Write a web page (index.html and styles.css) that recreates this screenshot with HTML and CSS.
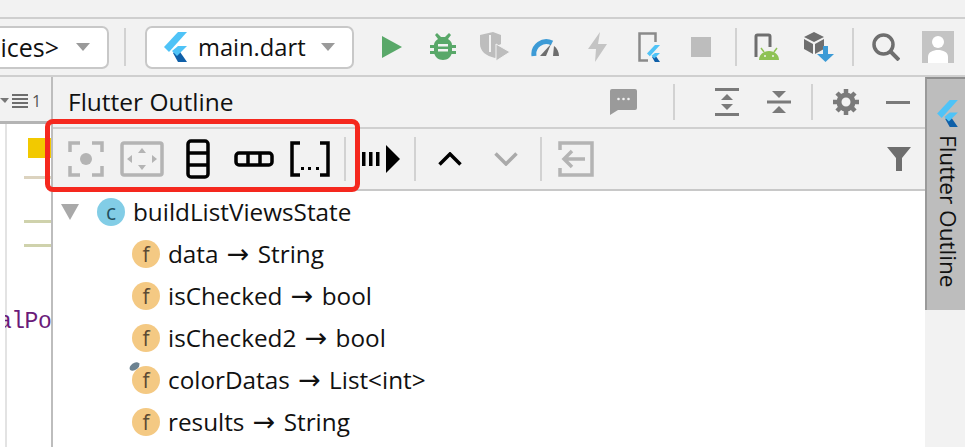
FILE: index.html
```html
<!DOCTYPE html>
<html>

<head>
  <meta charset="UTF-8">
  <meta name="viewport" content="width=device-width, initial-scale=1">
  <title>Flutter Outline</title>

  <link rel="stylesheet" href="styles.css">
</head>

<body>
  <svg class="defs" width="0" height="0">
    <symbol id="flutter" viewBox="0 0 23 30">
      <polygon points="9,21 14,17 23,30 14,30" fill="#0f5fa8" />
      <polygon points="14,0 23,0 5,20 0,15" fill="#4fc3f7" />
      <polygon points="14,14 23,14 13,24 8,19" fill="#4fc3f7" />
    </symbol>
  </svg>

  <div class="top_strip"></div>

  <div class="toolbar">
    <div class="combo combo_devices">
      <span>ices&gt;</span>
      <i class="combo_arrow"></i>
    </div>
    <i class="sep sep_tall sep_devices"></i>
    <div class="combo combo_main">
      <svg class="combo_logo" width="23" height="30"><use href="#flutter" /></svg>
      <span>main.dart</span>
      <i class="combo_arrow"></i>
    </div>

    <div class="tools tools_run">
      <span class="tool"><svg width="20" height="22" viewBox="0 0 20 22"><polygon points="0,0 20,11 0,22" fill="#59a869" /></svg></span>
      <span class="tool"><svg width="26" height="28" viewBox="0 0 26 28" fill="#59a869">
          <path d="M7 0l4 4h4l4-4 2 2-3 4c3 2 4 4 4 6h4v3h-4v3h4v3h-4.400c-1 3-4 6-8.600 6s-7.600-3-8.600-6H0v-3h4v-3H0v-3h4c0-2 1-4 4-6L5 2z" />
          <rect x="8" y="11" width="10" height="2.500" fill="#f2f2f2" />
          <rect x="8" y="16" width="10" height="2.500" fill="#f2f2f2" />
        </svg></span>
      <span class="tool"><svg width="30" height="30" viewBox="0 0 30 30">
          <path d="M0 3l13-3 8 3v9l-4 2v11l-2 1C6 24 0 19 0 12z" fill="#bdbdbd" />
          <path d="M10 3v17" stroke="#f2f2f2" stroke-width="2" />
          <polygon points="16,12 30,20 16,29" fill="#bdbdbd" stroke="#f2f2f2" stroke-width="1" />
        </svg></span>
      <span class="tool"><svg width="30" height="20" viewBox="0 0 30 20">
          <path d="M3 19A12.500 12.500 0 0 1 21 6" fill="none" stroke="#3d9bd6" stroke-width="5" />
          <path d="M9 19L20 7l-5 12z" fill="#6e6e6e" />
          <path d="M23 9c3 2 5 6 5 10h-6z" fill="#6e6e6e" />
        </svg></span>
      <span class="tool"><svg width="19" height="30" viewBox="0 0 19 30"><polygon points="12,0 0,17 8,17 7,30 19,12 10,12" fill="#c4c4c4" /></svg></span>
      <span class="tool"><svg width="22" height="30" viewBox="0 0 22 30">
          <path d="M10 28.500H1.500V1.500h16V10" fill="none" stroke="#8a8a8a" stroke-width="2.500" />
          <svg x="9" y="13" width="13" height="17"><use href="#flutter" /></svg>
        </svg></span>
      <span class="tool"><svg width="20" height="20" viewBox="0 0 20 20"><rect width="20" height="20" fill="#bdbdbd" /></svg></span>
    </div>
    <i class="sep sep_tall sep_a"></i>
    <div class="tools tools_device">
      <span class="tool"><svg width="26" height="28" viewBox="0 0 26 28">
          <path d="M3 24V3.500a1.500 1.500 0 0 1 1.500-1.500h11a1.500 1.500 0 0 1 1.500 1.500V14" fill="none" stroke="#6e6e6e" stroke-width="3" />
          <path d="M6 27c0-5 4-9 10-9s10 4 10 9z" fill="#8ec255" />
          <path d="M8 15l3 4M24 15l-3 4" stroke="#8ec255" stroke-width="1.500" />
          <circle cx="12" cy="23" r="1" fill="#f2f2f2" />
          <circle cx="20" cy="23" r="1" fill="#f2f2f2" />
        </svg></span>
      <span class="tool"><svg width="30" height="30" viewBox="0 0 30 30">
          <polygon points="10,0 20,5 10,10 0,5" fill="#6e6e6e" />
          <polygon points="0,7 9,12 9,22 0,17" fill="#6e6e6e" />
          <polygon points="11,12 20,7 20,17 11,22" fill="#6e6e6e" />
          <path d="M19 14h5v8h6l-8.500 8-8.500-8h6z" fill="#3d9bd6" />
        </svg></span>
    </div>
    <i class="sep sep_tall sep_b"></i>
    <span class="search"><svg width="28" height="28" viewBox="0 0 28 28" fill="none" stroke="#6e6e6e">
        <circle cx="11.500" cy="11.500" r="9.500" stroke-width="3.500" />
        <path d="M18 18l9 9" stroke-width="4" />
      </svg></span>
    <span class="avatar"><svg width="32" height="32" viewBox="0 0 32 32">
        <rect width="32" height="32" fill="#c4c4c4" />
        <circle cx="16" cy="11" r="6" fill="#fff" />
        <path d="M6 32v-6c0-5 5-7 10-7s10 2 10 7v6z" fill="#fff" />
      </svg></span>
  </div>

  <div class="work">
    <div class="editor">
      <div class="editor_head">
        <i class="mini_arrow"></i>
        <svg width="16" height="14" viewBox="0 0 16 14" fill="#6e6e6e">
          <rect width="16" height="2" />
          <rect y="4" width="16" height="2" />
          <rect y="8" width="16" height="2" />
          <rect y="12" width="16" height="2" />
        </svg>
        <span>1</span>
      </div>
      <div class="code">
        <i class="mark mark_yellow"></i>
        <i class="mark mark_tan"></i>
        <i class="mark mark_olive"></i>
        <i class="mark mark_olive2"></i>
        <p class="code_text">alPo</p>
      </div>
    </div>

    <div class="outline">
      <div class="outline_head">
        <p class="outline_title">Flutter Outline</p>
        <span class="head_tool head_comment"><svg width="27" height="26" viewBox="0 0 27 26">
            <path d="M2 0h23a2 2 0 0 1 2 2v17a2 2 0 0 1-2 2H8l-8 5V2a2 2 0 0 1 2-2z" fill="#9a9a9a" />
            <circle cx="8.500" cy="10" r="1.300" fill="#f2f2f2" />
            <circle cx="13.500" cy="10" r="1.300" fill="#f2f2f2" />
            <circle cx="18.500" cy="10" r="1.300" fill="#f2f2f2" />
          </svg></span>
        <i class="sep sep_head sep_c"></i>
        <span class="head_tool head_expand"><svg width="24" height="28" viewBox="0 0 24 28" fill="#7a7a7a">
            <rect width="24" height="3" />
            <rect y="25" width="24" height="3" />
            <polygon points="12,6 18,12 6,12" />
            <polygon points="12,22 18,16 6,16" />
          </svg></span>
        <span class="head_tool head_collapse"><svg width="24" height="26" viewBox="0 0 24 26" fill="#7a7a7a">
            <rect y="11.500" width="24" height="3" />
            <polygon points="12,9 5,2 19,2" />
            <polygon points="12,17 5,24 19,24" />
          </svg></span>
        <i class="sep sep_head sep_d"></i>
        <span class="head_tool head_gear"><svg width="26" height="26" viewBox="0 0 26 26">
            <circle cx="13" cy="13" r="7" fill="none" stroke="#7a7a7a" stroke-width="5" />
            <path d="M13 0v26M0 13h26M4 4l18 18M22 4L4 22" stroke="#7a7a7a" stroke-width="4.500" stroke-dasharray="4.500 17 4.500" />
          </svg></span>
        <span class="head_tool head_minus"><i></i></span>
      </div>

      <div class="outline_bar">
        <span class="slot"><svg width="36" height="36" viewBox="0 0 36 36" fill="none" stroke="#b4b4b4" stroke-width="3.500">
            <path d="M2 11V2h10M24 2h10v9M34 25v9H24M12 34H2v-9" />
            <circle cx="18" cy="18" r="6" fill="#b4b4b4" stroke="none" />
          </svg></span>
        <span class="slot"><svg width="44" height="36" viewBox="0 0 44 36">
            <rect x="2" y="2" width="40" height="32" rx="2" fill="none" stroke="#b4b4b4" stroke-width="3.500" />
            <g fill="#b4b4b4">
              <polygon points="22,7 26,12 18,12" />
              <polygon points="22,29 26,24 18,24" />
              <polygon points="7,18 12,14 12,22" />
              <polygon points="37,18 32,14 32,22" />
            </g>
          </svg></span>
        <span class="slot"><svg width="24" height="40" viewBox="0 0 24 40" fill="none" stroke="#000" stroke-width="3.500">
            <rect x="2" y="2" width="20" height="36" rx="3" />
            <path d="M2 14h20M2 26h20" />
          </svg></span>
        <span class="slot"><svg width="40" height="16" viewBox="0 0 40 16" fill="none" stroke="#000" stroke-width="3.500">
            <rect x="2" y="2" width="36" height="12" rx="3" />
            <path d="M14 2v12M26 2v12" />
          </svg></span>
        <span class="slot"><svg width="40" height="36" viewBox="0 0 40 36">
            <path d="M10 2H2v32h8M30 2h8v32h-8" fill="none" stroke="#000" stroke-width="3.500" />
            <g>
              <rect x="11" y="26" width="3" height="3" />
              <rect x="18" y="26" width="3" height="3" />
              <rect x="26" y="26" width="3" height="3" />
            </g>
          </svg></span>
        <i class="sep sep_bar sep_e"></i>
        <span class="slot_wide"><svg width="38" height="28" viewBox="0 0 38 28">
            <rect y="7" width="3.500" height="14" />
            <rect x="7" y="7" width="3.500" height="14" />
            <rect x="14" y="7" width="3.500" height="14" />
            <polygon points="24,0 38,14 24,28" />
          </svg></span>
        <i class="sep sep_bar sep_f"></i>
        <span class="slot"><svg width="24" height="14" viewBox="0 0 24 14" fill="none" stroke="#000" stroke-width="3.500"><path d="M1.500 12.500L12 2l10.500 10.500" /></svg></span>
        <span class="slot"><svg width="24" height="14" viewBox="0 0 24 14" fill="none" stroke="#aaa" stroke-width="3.500"><path d="M1.500 1.500L12 12 22.500 1.500" /></svg></span>
        <i class="sep sep_bar sep_g"></i>
        <span class="slot"><svg width="36" height="36" viewBox="0 0 36 36" fill="none" stroke="#b4b4b4" stroke-width="3.500">
            <path d="M2 9V2h32v32H2v-7" />
            <path d="M27 18H6M14 10l-8 8 8 8" />
          </svg></span>
        <span class="filter"><svg width="24" height="24" viewBox="0 0 24 24"><polygon points="0,0 24,0 15,11 15,24 9,24 9,11" fill="#6e6e6e" /></svg></span>
      </div>

      <ul class="tree">
        <li class="row row_class">
          <i class="tree_arrow"></i>
          <span class="badge badge_c">c</span>
          <span class="row_text">buildListViewsState</span>
        </li>
        <li class="row">
          <span class="badge badge_f">f</span>
          <span class="row_text">data <b class="to">→</b> String</span>
        </li>
        <li class="row">
          <span class="badge badge_f">f</span>
          <span class="row_text">isChecked <b class="to">→</b> bool</span>
        </li>
        <li class="row">
          <span class="badge badge_f">f</span>
          <span class="row_text">isChecked2 <b class="to">→</b> bool</span>
        </li>
        <li class="row">
          <span class="badge badge_f badge_pin">f<i class="pin"></i></span>
          <span class="row_text">colorDatas <b class="to">→</b> List&lt;int&gt;</span>
        </li>
        <li class="row">
          <span class="badge badge_f">f</span>
          <span class="row_text">results <b class="to">→</b> String</span>
        </li>
      </ul>
    </div>

    <div class="side">
      <div class="side_tab">
        <svg width="21" height="27"><use href="#flutter" /></svg>
        <span class="side_text">Flutter Outline</span>
      </div>
    </div>
  </div>

  <div class="red_box"></div>
</body>

</html>
```

FILE: styles.css
```css
* {
  margin: 0;
  padding: 0;
  box-sizing: border-box;
}

body {
  position: relative;
  width: 965px;
  height: 447px;
  overflow: hidden;
  background-color: #f2f2f2;
  color: #111;
  font-family: "Open Sans", "Noto Sans", sans-serif;
  font-size: 24px;
}

i {
  display: block;
}

.defs {
  position: absolute;
}

.top_strip {
  height: 17px;
}

.toolbar {
  display: flex;
  align-items: center;
  height: 60px;
  border-top: 2px solid #cfcfcf;
  border-bottom: 2px solid #cfcfcf;
}

.combo {
  display: flex;
  align-items: center;
  flex: none;
  height: 43px;
  background-color: #fff;
  border: 2px solid #c8c8c8;
  border-radius: 7px;
}

.combo_devices {
  justify-content: flex-end;
  width: 120px;
  margin-left: -11px;
  padding-right: 17px;
  font-size: 25px;
}

.combo_main {
  width: 209px;
  padding-left: 17px;
  font-size: 23.7px;
}

.combo_logo {
  margin-right: 11px;
}

.combo_arrow {
  width: 0;
  height: 0;
  margin-left: 15px;
  border-left: 7px solid transparent;
  border-right: 7px solid transparent;
  border-top: 8px solid #9a9a9a;
}

.combo_devices .combo_arrow {
  margin-left: 17px;
}

.sep {
  flex: none;
  width: 2px;
  background-color: #d2d2d2;
}

.sep_tall {
  height: 38px;
}

.sep_devices {
  margin: 0 19px 0 15px;
}

.tools {
  display: flex;
  align-items: center;
}

.tools_run {
  margin-left: 12px;
}

.tool {
  display: flex;
  justify-content: center;
  align-items: center;
  width: 51.5px;
}

.tools_device .tool {
  width: 53px;
}

.sep_a {
  margin-left: 8px;
}

.tools_device {
  margin-left: 3px;
}

.sep_b {
  margin-left: 6px;
}

.search {
  display: flex;
  margin-left: 18px;
}

.avatar {
  display: flex;
  margin-left: 22px;
}

.work {
  display: flex;
  height: 370px;
}

.editor {
  flex: none;
  width: 53px;
  border-right: 2px solid #bdbdbd;
}

.editor_head {
  display: flex;
  align-items: center;
  height: 47px;
  padding-top: 3px;
  border-bottom: 3px solid #b4b4b4;
  font-size: 16px;
  color: #555;
}

.editor_head span {
  margin-left: 4px;
}

.mini_arrow {
  width: 0;
  height: 0;
  margin-right: 3px;
  border-left: 5px solid #f2f2f2;
  border-right: 4px solid transparent;
  border-top: 5px solid #777;
}

.code {
  height: 323px;
  overflow: hidden;
  background-color: #fff;
  border-left: 5px solid #fff;
  box-shadow: inset 2px 0 0 #e3e3e3;
  padding-top: 14px;
}

.mark {
  margin-left: 19px;
  height: 3px;
}

.mark_yellow {
  height: 20px;
  margin-left: 23px;
  background-color: #f2c900;
}

.mark_tan {
  margin-top: 18px;
  background-color: #dcd3bf;
}

.mark_olive {
  margin-top: 41px;
  background-color: #cfd2ac;
}

.mark_olive2 {
  margin-top: 21px;
  background-color: #cfd2ac;
}

.code_text {
  margin: 60px 0 0 -7px;
  color: #6a1b7a;
  font-family: "Liberation Mono", monospace;
  font-size: 23px;
  line-height: 30px;
  letter-spacing: -0.5px;
  white-space: nowrap;
}

.outline {
  flex: none;
  width: 872px;
  display: flex;
  flex-direction: column;
}

.outline_head {
  display: flex;
  align-items: center;
  flex: none;
  height: 52px;
  border-bottom: 2px solid #d0d0d0;
}

.outline_title {
  margin: 0 0 2px 15px;
  width: 542px;
  font-size: 24.5px;
}

.head_tool {
  display: flex;
  justify-content: center;
  align-items: center;
}

.head_comment {
  width: 27px;
}

.sep_head {
  height: 36px;
}

.sep_c {
  margin-left: 36px;
}

.head_expand {
  margin-left: 40px;
}

.head_collapse {
  margin-left: 28px;
}

.sep_d {
  margin-left: 20px;
}

.head_gear {
  margin-left: 20px;
}

.head_minus {
  margin-left: 27px;
}

.head_minus i {
  width: 24px;
  height: 3px;
  background-color: #7a7a7a;
}

.outline_bar {
  display: flex;
  align-items: center;
  flex: none;
  height: 62px;
  padding-left: 5px;
  border-bottom: 2px solid #c8c8c8;
}

.slot,
.slot_wide {
  display: flex;
  justify-content: center;
  align-items: center;
  width: 56px;
  flex: none;
}

.sep_bar {
  height: 44px;
}

.sep_e {
  margin: 0 7px 0 6px;
}

.sep_f {
  margin: 0 6px 0 5px;
}

.sep_g {
  margin: 0 6px 0 6px;
}

.filter {
  display: flex;
  margin-left: auto;
  margin-right: 14px;
}

.tree {
  flex: 1;
  list-style: none;
  background-color: #fff;
  font-size: 24.3px;
}

.to {
  margin: 0 2px;
  font-family: "DejaVu Sans", sans-serif;
  font-weight: normal;
  font-size: 27px;
  line-height: 1;
}

.row {
  display: flex;
  align-items: center;
  height: 42px;
  padding-left: 79px;
  white-space: nowrap;
}

.row_text {
  margin-bottom: 2px;
}

.row_class {
  padding-left: 8px;
}

.tree_arrow {
  width: 0;
  height: 0;
  margin-right: 18px;
  border-left: 9px solid transparent;
  border-right: 9px solid transparent;
  border-top: 16px solid #a9a9a9;
}

.badge {
  position: relative;
  display: flex;
  justify-content: center;
  align-items: center;
  flex: none;
  width: 28px;
  height: 28px;
  margin-right: 8px;
  border-radius: 50%;
  font-size: 21px;
  line-height: 1;
}

.badge_c {
  background-color: #82cde6;
  color: #22505f;
}

.badge_f {
  background-color: #f4c983;
  color: #5b4a33;
}

.pin {
  position: absolute;
  top: -3px;
  left: -3px;
  width: 11px;
  height: 7px;
  border-radius: 50%;
  background-color: #6c8290;
  transform: rotate(-35deg);
}

.side {
  flex: 1;
}

.side_tab {
  display: flex;
  flex-direction: column;
  align-items: center;
  height: 233px;
  padding: 21px 0 0 3px;
  background-color: #bdbdbd;
  border-top: 2px solid #8f8f8f;
  border-left: 2px solid #9a9a9a;
}

.side_text {
  margin-top: 8px;
  writing-mode: vertical-rl;
  font-size: 22.6px;
  line-height: 26px;
  white-space: nowrap;
}

.red_box {
  position: absolute;
  left: 45px;
  top: 119px;
  width: 315px;
  height: 73px;
  border: 5px solid #f5281e;
  border-radius: 8px;
}
```
